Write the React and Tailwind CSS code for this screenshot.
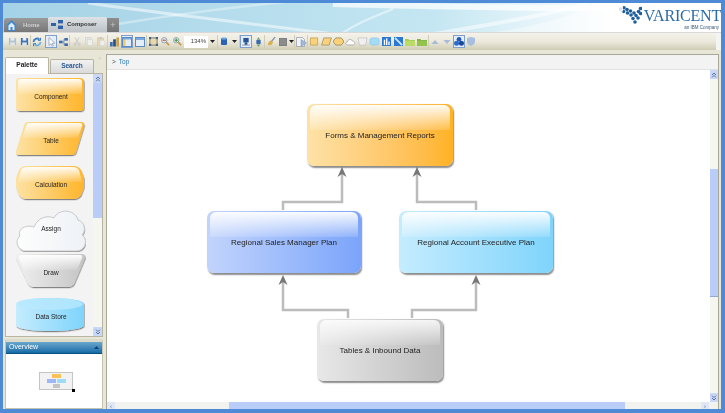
import React from 'react';

const sans = { fontFamily: '"Liberation Sans", Arial, sans-serif' };

// ---- toolbar icons ----
const Floppy = ({ c = '#3f72b4' }) => (
  <svg width="9" height="9" viewBox="0 0 10 10">
    <path d="M1 1h7l1 1v7H1z" fill={c} />
    <rect x="3" y="1" width="4" height="3" fill="#e8eef6" />
    <rect x="2.5" y="6" width="5" height="3" fill="#dfe6ee" />
  </svg>
);
const Refresh = () => (
  <svg width="10" height="10" viewBox="0 0 10 10" fill="none" stroke="#3f7fc0" strokeWidth="1.8">
    <path d="M1.5 5a3.5 3.5 0 0 1 6-2.4" />
    <path d="M8.5 5a3.5 3.5 0 0 1-6 2.4" stroke="#6aaee0" />
    <path d="M8.5 0.8v2.6H6" strokeWidth="1" />
    <path d="M1.5 9.2V6.6H4" strokeWidth="1" />
  </svg>
);
const Cursor = () => (
  <svg width="9" height="10" viewBox="0 0 9 10">
    <path d="M2 .5v8l2-1.8 1.2 2.6 1.2-.6-1.2-2.5h2.6z" fill="#fff" stroke="#8a94a4" strokeWidth=".7" />
  </svg>
);
const Connect = () => (
  <svg width="9" height="8" viewBox="0 0 10 9">
    <rect x="0" y="3" width="4" height="3" fill="#3a6cb0" />
    <rect x="6" y="0" width="4" height="3" fill="#3a6cb0" />
    <rect x="6" y="6" width="4" height="3" fill="#3a6cb0" />
    <path d="M4 4.5h1.5V1.5H6M5.5 4.5v3H6" fill="none" stroke="#3a6cb0" strokeWidth=".7" />
  </svg>
);
const Cut = () => (
  <svg width="8" height="9" viewBox="0 0 9 10" fill="none" stroke="#c4c6c8" strokeWidth="1">
    <path d="M7 .5 3 7M2 .5 6 7" />
    <circle cx="2.3" cy="8" r="1.3" />
    <circle cx="6.7" cy="8" r="1.3" />
  </svg>
);
const Copy = () => (
  <svg width="8" height="9" viewBox="0 0 9 10">
    <rect x=".5" y=".5" width="6" height="7" fill="#e6e6e2" stroke="#d0d0cc" strokeWidth=".7" />
    <rect x="2.5" y="2.5" width="6" height="7" fill="#efefec" stroke="#d0d0cc" strokeWidth=".7" />
  </svg>
);
const Paste = () => (
  <svg width="8" height="9" viewBox="0 0 9 10">
    <rect x=".5" y="1" width="7" height="8.5" fill="#e2d6b6" stroke="#d0c6a8" strokeWidth=".6" />
    <rect x="2" y="0" width="4" height="2" fill="#cdc9be" />
    <rect x="3.5" y="4" width="5" height="5.5" fill="#efefec" stroke="#d6d6d2" strokeWidth=".5" />
  </svg>
);
const Chart = () => (
  <svg width="9" height="10" viewBox="0 0 10 10">
    <rect x="0" y="5" width="3" height="5" fill="#3a6cb0" />
    <rect x="3.5" y="2" width="3" height="8" fill="#274f8c" />
    <rect x="7" y="0" width="3" height="10" fill="#c4a24c" />
  </svg>
);
const Pane = ({ side }) => (
  <svg width="10" height="10" viewBox="0 0 10 10">
    <rect x=".5" y=".5" width="9" height="9" fill="#e4eefa" stroke="#5a8cc8" />
    {side ? <rect x="1" y="1" width="2.5" height="8" fill="#f2c866" /> : <rect x="1" y="1" width="8" height="2" fill="#7fa8dc" />}
    {side && <rect x="1" y="1" width="8" height="1.5" fill="#7fa8dc" />}
  </svg>
);
const Fit = () => (
  <svg width="9" height="9" viewBox="0 0 10 10">
    <rect x="1" y="1" width="8" height="8" fill="#e8d9a8" stroke="#6a7480" />
    <rect x="0" y="0" width="2.4" height="2.4" fill="#44607e" />
    <rect x="7.6" y="0" width="2.4" height="2.4" fill="#44607e" />
    <rect x="0" y="7.6" width="2.4" height="2.4" fill="#44607e" />
    <rect x="7.6" y="7.6" width="2.4" height="2.4" fill="#44607e" />
  </svg>
);
const Zoom = ({ c }) => (
  <svg width="9" height="9" viewBox="0 0 10 10">
    <path d="M5.5 5.5 9 9" stroke="#c49a50" strokeWidth="2" />
    <circle cx="3.6" cy="3.6" r="3" fill="#dfeaf2" stroke="#8e9ca8" />
    <rect x="1.8" y="3" width="3.6" height="1.2" fill={c} />
    {c === '#3f9a3f' && <rect x="3" y="1.8" width="1.2" height="3.6" fill={c} />}
  </svg>
);
const Drop = () => (
  <svg width="5" height="3" viewBox="0 0 5 3"><path d="M0 0h5L2.5 3z" fill="#222" /></svg>
);
const Can = () => (
  <svg width="6" height="9" viewBox="0 0 7 10">
    <rect x="0" y="1" width="7" height="8" rx="1" fill="#2a62b8" />
    <ellipse cx="3.5" cy="1.6" rx="3.5" ry="1.4" fill="#6fa0e0" />
  </svg>
);
const Pin = () => (
  <svg width="8" height="9" viewBox="0 0 9 10">
    <rect x="1.5" y="1" width="6" height="5" fill="#27558f" />
    <rect x="3" y="6" width="3" height="3" fill="#27558f" />
    <rect x="0" y="8.5" width="9" height="1" fill="#8a9aaa" />
  </svg>
);
const Updown = () => (
  <svg width="7" height="10" viewBox="0 0 8 11">
    <path d="M4 0 6 2.5H2zM4 11 2 8.5h4z" fill="#6aa66a" />
    <rect x="1.5" y="3" width="5" height="5" rx="1" fill="#3a6cb0" />
  </svg>
);
const Brush = () => (
  <svg width="9" height="9" viewBox="0 0 10 10">
    <path d="M9 0 5 5" stroke="#8c9aac" strokeWidth="1.6" />
    <path d="M1 9c0-3 2-5 4-5l1.5 1.5C6.5 8 4 10 1 9z" fill="#d8b04c" />
  </svg>
);
const Square = () => <div className="h-[8px] w-[8px] border border-[#808080] bg-[#8c8c8c]" />;
const Page = () => (
  <svg width="11" height="10" viewBox="0 0 11 10">
    <path d="M.5.5h6l2 2v7h-8z" fill="#f3f3f3" stroke="#8e98a6" strokeWidth=".7" />
    <path d="M5 2.5 10.5 6 5 9.5z" fill="#a0b8d8" stroke="#7a94b8" strokeWidth=".5" />
  </svg>
);

const ShapeIcon = ({ d, fill, stroke }) => (
  <svg width="11" height="9" viewBox="0 0 12 10">
    <path d={d} fill={fill} stroke={stroke} strokeWidth=".8" />
  </svg>
);
const BlueTile = ({ children }) => (
  <svg width="9" height="9" viewBox="0 0 10 10">
    <rect width="10" height="10" fill="#2a7ad4" />
    {children}
  </svg>
);
const Folder = ({ light }) => (
  <svg width="10" height="8" viewBox="0 0 12 9">
    <path d="M0 1h4l1 1h7v7H0z" fill={light ? '#a6cc52' : '#7fb440'} />
    <rect x="0" y="3" width="12" height="6" fill={light ? '#bcdc68' : '#92c44c'} />
  </svg>
);
const Tri = ({ up }) => (
  <svg width="8" height="4" viewBox="0 0 9 5">
    <path d={up ? 'M4.5 0 9 5H0z' : 'M0 0h9L4.5 5z'} fill="#a8bcd8" />
  </svg>
);
const Boxes = () => (
  <svg width="10" height="9" viewBox="0 0 11 10">
    <circle cx="5.5" cy="2.6" r="2.6" fill="#2558b0" />
    <circle cx="2.8" cy="7" r="2.8" fill="#2c6cc8" />
    <circle cx="8.2" cy="7" r="2.8" fill="#1c4a98" />
  </svg>
);
const Shield = () => (
  <svg width="8" height="9" viewBox="0 0 9 10">
    <path d="M0 1 4.5 0 9 1v4c0 3-2.5 4-4.5 5C2.5 9 0 8 0 5z" fill="#a8bede" />
  </svg>
);

const Sep = () => <div className="h-[13px] w-px bg-[#cfccb8]" />;
const Tool = ({ children }) => (
  <div className="flex h-[14px] w-[12px] items-center justify-center">{children}</div>
);
const Pressed = ({ children }) => (
  <div className="flex h-[13px] w-[12px] items-center justify-center border border-[#7f9fcc] bg-[#e4edf8]">{children}</div>
);

const Toolbar = () => (
  <div className="flex h-[17px] w-[713px] items-center bg-linear-to-b from-[#f4f2ea] via-[#ece9dc] to-[#cfccb4] pl-[3px]" style={sans}>
    <Tool><Floppy c="#b4c2d0" /></Tool>
    <Tool><Floppy /></Tool>
    <Sep />
    <Tool><Refresh /></Tool>
    <div className="w-[2px]" />
    <Pressed><Cursor /></Pressed>
    <Tool><Connect /></Tool>
    <Sep />
    <div className="w-px" />
    <Tool><Cut /></Tool>
    <Tool><Copy /></Tool>
    <Tool><Paste /></Tool>
    <Sep />
    <Tool><Chart /></Tool>
    <div className="w-px" />
    <Pressed><Pane side /></Pressed>
    <div className="w-px" />
    <Tool><Pane /></Tool>
    <Sep />
    <Tool><Fit /></Tool>
    <Tool><Zoom c="#c04a3a" /></Tool>
    <Tool><Zoom c="#3f9a3f" /></Tool>
    <div className="ml-[1px] flex h-[12px] w-[24px] items-center justify-end bg-white pr-[2px] text-[6px] text-[#444]">134%</div>
    <div className="flex w-[9px] justify-center"><Drop /></div>
    <Sep />
    <Tool><Can /></Tool>
    <div className="flex w-[9px] justify-center"><Drop /></div>
    <Sep />
    <Pressed><Pin /></Pressed>
    <Tool><Updown /></Tool>
    <Sep />
    <Tool><Brush /></Tool>
    <Tool><Square /></Tool>
    <div className="flex w-[5px] justify-center"><Drop /></div>
    <Sep />
    <Tool><Page /></Tool>
    <Sep />
    <Tool><ShapeIcon d="M1.5 1h8v8h-8z" fill="#fbd27a" stroke="#b89a4c" /></Tool>
    <Tool><ShapeIcon d="M3 1h8.5L9 9H.5z" fill="#fbd27a" stroke="#9a8a5c" /></Tool>
    <Tool><ShapeIcon d="M3 1h6l2.5 3v2L9 9H3L.5 6V4z" fill="#fbd27a" stroke="#8a7a4c" /></Tool>
    <Tool><ShapeIcon d="M3 8.8C0 8.8 0 5.5 2.5 5.5 3 2 7.5 2 8 4.5c3.5 0 3.5 4.3 1 4.3z" fill="#fff" stroke="#9f9f9f" /></Tool>
    <Tool><ShapeIcon d="M1 1h10L9.5 9h-7z" fill="#f0f0f0" stroke="#c0c0c0" /></Tool>
    <Tool><ShapeIcon d="M1 2.5C1 .5 11 .5 11 2.5v5c0 2-10 2-10 0z" fill="#a4dcf8" stroke="#8cc4e4" /></Tool>
    <Tool>
      <BlueTile>
        <rect x="2" y="3" width="1.5" height="6" fill="#fff" />
        <rect x="4.5" y="1.5" width="1.5" height="7.5" fill="#fff" />
        <rect x="7" y="5" width="1.5" height="4" fill="#fff" />
      </BlueTile>
    </Tool>
    <Tool>
      <BlueTile>
        <path d="M1 1 9 9" stroke="#cfe6fa" strokeWidth="2" />
      </BlueTile>
    </Tool>
    <Tool><Folder light /></Tool>
    <Tool><Folder /></Tool>
    <Sep />
    <Tool><Tri up /></Tool>
    <Tool><Tri /></Tool>
    <Pressed><Boxes /></Pressed>
    <Tool><Shield /></Tool>
  </div>
);

// ---- header ----
const Logo = () => (
  <div className="flex w-[105px] flex-col items-end pt-[3px]">
    <div className="flex items-center gap-[2px]">
      <svg width="23" height="19" viewBox="0 0 23 19" fill="#1f5f9c">
        {[[1.5, 3], [5, 1.8], [8, 3.5], [4.5, 5.5], [8.5, 7], [11.5, 5], [12, 9], [15, 7], [14, 12.5], [17, 9.5], [16, 16], [19, 12], [19.5, 5.5], [21.5, 2.5], [21.5, 7.5]].map(([x, y], i) => (
          <circle key={i} cx={x} cy={y} r="1.8" />
        ))}
      </svg>
      <span className="text-[16px] leading-[18px] tracking-[-0.2px] text-[#2a6ba4]" style={{ fontFamily: '"Liberation Serif", "Times New Roman", serif' }}>VARICENT</span>
    </div>
    <span className="pr-[2px] text-[4.5px] leading-[5px] text-[#3a5a7a]" style={sans}>an IBM Company</span>
  </div>
);

const Header = () => (
  <div className="relative flex h-[30px] items-start justify-end overflow-hidden border-b border-[#d8d8d8] bg-linear-to-r from-[#a4d2e6] via-[#c4e6f2] via-60% to-white to-85%">
    <svg className="absolute left-0 top-0" width="620" height="30" viewBox="0 0 620 30" fill="none">
      <path d="M85 0 C 140 8, 190 14, 340 32" stroke="#fff" strokeOpacity=".5" strokeWidth="3" />
      <path d="M60 30 C 120 20, 190 8, 292 -2" stroke="#fff" strokeOpacity=".35" strokeWidth="2.5" />
      <path d="M330 1 C 420 3, 520 6, 620 5" stroke="#fff" strokeOpacity=".7" strokeWidth="6" />
      <path d="M337 32 C 350 22, 370 14, 390 6" stroke="#fff" strokeOpacity=".5" strokeWidth="2" />
      <path d="M425 32 C 470 24, 540 14, 585 0" stroke="#fff" strokeOpacity=".5" strokeWidth="4" />
      <path d="M470 32 C 520 26, 570 16, 590 0 L 620 0 L 620 32 Z" fill="#fff" fillOpacity=".4" />
    </svg>
    <Logo />
    <div className="absolute bottom-0 left-[1px] flex items-end" style={sans}>
      <div className="flex h-[14px] w-[44px] items-center gap-[6px] rounded-tl-[3px] bg-linear-to-b from-[#9a9a9a] to-[#777] pl-[2px]">
        <svg width="11" height="11" viewBox="0 0 11 11">
          <path d="M5.5 0 11 5.5H9.5V11h-8V5.5H0z" fill="#3f86cc" />
          <path d="M2.5 5.5 5.5 2.5l3 3V10h-6z" fill="#dcecf8" />
          <rect x="4.5" y="7" width="2" height="3" fill="#3f86cc" />
        </svg>
        <span className="text-[6px] font-bold text-[#cfcfcf]">Home</span>
      </div>
      <div className="flex h-[15px] w-[59px] items-center gap-[4px] rounded-t-[2px] bg-linear-to-b from-[#dfe3e6] to-[#bcc2c6] pl-[3px]">
        <svg width="12" height="9" viewBox="0 0 12 9">
          <rect x="0" y="3" width="5" height="3" fill="#2f62a8" />
          <rect x="7" y="0" width="5" height="3.4" fill="#2f62a8" />
          <rect x="7" y="5.6" width="5" height="3.4" fill="#2f62a8" />
        </svg>
        <span className="text-[6px] font-bold text-[#333]">Composer</span>
      </div>
      <div className="flex h-[14px] w-[12px] items-center justify-center bg-linear-to-b from-[#8e8e8e] to-[#747474] text-[9px] leading-none text-[#c8c8c8]">+</div>
    </div>
  </div>
);

// ---- palette ----
const Defs = () => (
  <svg width="0" height="0" className="absolute">
    <defs>
      <linearGradient id="org" x1="0" x2="1"><stop offset="0" stopColor="#fde2a4" /><stop offset="1" stopColor="#ffb52a" /></linearGradient>
      <linearGradient id="gry" x1="0" x2="1"><stop offset="0" stopColor="#f0f0f0" /><stop offset="1" stopColor="#c4c4c4" /></linearGradient>
      <linearGradient id="cyn" x1="0" x2="1"><stop offset="0" stopColor="#c4ecfe" /><stop offset="1" stopColor="#7fd4fc" /></linearGradient>
      <linearGradient id="cld" x1="0" x2="1"><stop offset="0" stopColor="#fdfdfd" /><stop offset="1" stopColor="#eef2f6" /></linearGradient>
      <linearGradient id="gls" x1="0" x2="0" y1="0" y2="1"><stop offset="0" stopColor="#fff" stopOpacity=".95" /><stop offset="1" stopColor="#fff" stopOpacity=".1" /></linearGradient>
      <filter id="shd" x="-10%" y="-10%" width="125%" height="130%"><feDropShadow dx="0.6" dy="1.2" stdDeviation="0.7" floodColor="#000" floodOpacity=".45" /></filter>
    </defs>
  </svg>
);

const PaletteItem = ({ label, h, d, fill, gloss, extra, labelClass = 'translate-y-[1.5px]' }) => (
  <div className="grid place-items-center">
    <svg className="[grid-area:1/1]" width="70" height={h} viewBox={`0 0 70 ${h}`}>
      <path d={d} fill={fill} filter="url(#shd)" />
      {gloss && <path d={gloss} fill="url(#gls)" />}
      {extra}
    </svg>
    <span className={`[grid-area:1/1] text-[6.5px] leading-none text-[#222] ${labelClass}`} style={sans}>{label}</span>
  </div>
);

const ScrollBtn = ({ up, className = 'h-[9px] w-full' }) => (
  <div className={`flex items-center justify-center bg-[#c9d8f6] ${className}`}>
    <svg width="6" height="6" viewBox="0 0 6 6" fill="none" stroke="#3c5a8c">
      <path d={up ? 'M1 3 3 1l2 2M1 5.4l2-2 2 2' : 'M1 .6l2 2 2-2M1 3l2 2 2-2'} strokeWidth=".8" />
    </svg>
  </div>
);

const CLOUD = 'M10 42C2 42-2 32 4 27 1 20 10 15 18 18 22 8 32 6 38 9 42 0 58-1 62 11 69 13 70 22 66 26 72 30 70 42 60 42z';

const Palette = () => (
  <div className="flex min-h-0 flex-1 border border-t-0 border-[#b7b5a2] bg-[#f3f3f3]">
    <div className="flex min-w-0 flex-1 flex-col items-center gap-[8px] overflow-hidden pl-[3px] pt-[3px]">
      <PaletteItem
        label="Component"
        h={36}
        d="M4 1h60q4 0 4 4v25q0 4-4 4H4q-4 0-4-4V5q0-4 4-4z"
        fill="url(#org)"
        gloss="M5 2h58q3 0 3 3v12H2V5q0-3 3-3z"
      />
      <PaletteItem
        label="Table"
        h={36}
        d="M12 1h53q4 0 3 4l-8 26q-1 3-5 3H3q-4 0-3-4l8-25q1-4 4-4z"
        fill="url(#org)"
        gloss="M13 2h51q3 0 2 3l-4 12H6l4-12q1-3 3-3z"
      />
      <PaletteItem
        label="Calculation"
        h={36}
        d="M10 1h48q4 0 7 4l3 8v9l-3 8q-3 4-7 4H10q-4 0-7-4l-3-8v-9l3-8q3-4 7-4z"
        fill="url(#org)"
        gloss="M11 2h46q4 0 6 3l3 12H2L5 5q2-3 6-3z"
      />
      <PaletteItem
        label="Assign"
        h={43}
        d={CLOUD}
        fill="url(#cld)"
        labelClass="-translate-y-[1.5px]"
        extra={<path d={CLOUD} fill="none" stroke="#c9c9c9" />}
      />
      <div className="-mt-[7px]">
        <PaletteItem
          label="Draw"
          h={36}
          d="M3 1h63q4 0 3 4L58 31q-2 3-5 3H17q-3 0-5-3L0 5Q-1 1 3 1z"
          fill="url(#gry)"
          gloss="M5 2h59q3 0 2 3l-5 12H8L3 5Q2 2 5 2z"
        />
      </div>
      <PaletteItem
        label="Data Store"
        h={36}
        d="M0 7C0-1 68-1 68 7v21c0 8-68 8-68 0z"
        fill="url(#cyn)"
        extra={<ellipse cx="34" cy="7" rx="33" ry="6" fill="#b8e8fe" fillOpacity=".8" />}
      />
    </div>
    <div className="flex w-[9px] flex-col justify-between bg-[#f6f6f0]">
      <ScrollBtn up />
      <div className="mb-auto h-[135px] bg-[#b9cdf8]" />
      <ScrollBtn />
    </div>
  </div>
);

const Overview = () => (
  <div className="mt-[2px] flex h-[70px] flex-col border border-t-[3px] border-[#c4c2b0] border-t-[#dcdacb] bg-white" style={sans}>
    <div className="flex h-[12px] items-center justify-between border-b border-[#0b4f80] bg-linear-to-b from-[#6aa6cc] to-[#0f6ca8] px-[3px]">
      <span className="text-[7px] text-white">Overview</span>
      <svg width="5" height="3" viewBox="0 0 5 3"><path d="M2.5 0 5 3H0z" fill="#123f7c" /></svg>
    </div>
    <div className="flex flex-1 justify-center pl-[4px] pt-[18px]">
      <div className="relative flex h-[18px] w-[34px] flex-col items-center gap-[1px] border border-[#c4c4c4] bg-[#f2f2f2] pt-[1px]">
        <div className="h-[4px] w-[9px] bg-[#fbc25a]" />
        <div className="flex gap-[1px]">
          <div className="h-[4px] w-[9px] bg-[#9db8f4]" />
          <div className="h-[4px] w-[9px] bg-[#9bdcfa]" />
        </div>
        <div className="h-[4px] w-[7px] bg-[#c4c4c4]" />
        <div className="absolute -bottom-[3px] -right-[3px] h-[3px] w-[3px] bg-black" />
      </div>
    </div>
  </div>
);

const LeftPanel = () => (
  <div className="flex w-[98px] flex-col" style={sans}>
    <div className="flex h-[19px] items-end">
      <div className="z-10 -mb-px flex h-[17px] w-[44px] items-center justify-center rounded-t-[2px] border border-b-0 border-[#b7b5a2] bg-white pb-[2px] text-[6.5px] font-bold text-[#222]">Palette</div>
      <div className="ml-[1px] flex h-[14px] w-[44px] items-center justify-center rounded-t-[2px] border border-b-0 border-[#b7b5a2] bg-linear-to-b from-[#f2f2f2] to-[#dadada] pb-[1px] text-[6.5px] font-bold text-[#2a5a96]">Search</div>
      <span className="ml-[4px] self-start text-[6px] leading-[8px] text-[#cfcdbc]">×</span>
    </div>
    <div className="flex min-h-0 flex-1 flex-col border-t border-[#b7b5a2]">
      <Palette />
      <Overview />
    </div>
  </div>
);

// ---- canvas ----
const Node = ({ label, className, from, gloss }) => (
  <div className={`absolute flex items-center justify-center overflow-hidden rounded-[7px] pt-[2px] shadow-[1px_1.5px_1.5px_rgba(0,0,0,0.45)] ${className} ${from}`}>
    <div className={`absolute left-[3px] right-[3px] top-[1px] h-[25px] rounded-t-[6px] ${gloss}`} />
    <span className="relative text-[8px] text-[#222]" style={sans}>{label}</span>
  </div>
);

const Arrow = ({ d, x, y }) => (
  <g>
    <path d={d} fill="none" stroke="#bcbcbc" strokeWidth="2.5" />
    <path d={`M${x} ${y} l4.5 10 l-4.5 -3 l-4.5 3 z`} fill="#777" />
  </g>
);

const Canvas = () => (
  <div className="relative flex-1 bg-white">
    <svg className="absolute left-0 top-0" width="603" height="332" viewBox="0 0 603 332">
      <Arrow d="M176 140V132H235V103" x={235} y={97} />
      <Arrow d="M369 140V132H310V103" x={310} y={97} />
      <Arrow d="M241 248V240H176V211" x={176} y={205} />
      <Arrow d="M305 248V240H369V211" x={369} y={205} />
    </svg>
    <Node
      label="Forms & Management Reports"
      className="left-[200px] top-[34px] h-[62px] w-[146px]"
      from="bg-linear-to-r from-[#fde2a6] to-[#ffb21f]"
      gloss="bg-linear-to-b from-white/95 to-white/15"
    />
    <Node
      label="Regional Sales Manager Plan"
      className="left-[100px] top-[141px] h-[62px] w-[154px]"
      from="bg-linear-to-r from-[#c2d4fc] to-[#7ba4fa]"
      gloss="bg-linear-to-b from-white/95 to-white/15"
    />
    <Node
      label="Regional Account Executive Plan"
      className="left-[292px] top-[141px] h-[62px] w-[154px]"
      from="bg-linear-to-r from-[#c4ecfe] to-[#7fd4fc]"
      gloss="bg-linear-to-b from-white/95 to-white/15"
    />
    <Node
      label="Tables & Inbound Data"
      className="left-[210px] top-[249px] h-[62px] w-[126px]"
      from="bg-linear-to-r from-[#e8e8e8] to-[#bcbcbc]"
      gloss="bg-linear-to-b from-white/85 to-white/10"
    />
  </div>
);

const MainPanel = () => (
  <div className="flex min-w-0 flex-1 flex-col border-x border-t border-[#a9a798]">
    <div className="flex h-[15px] items-center gap-[3px] border-b border-[#e2e2e2] bg-[#f3f3f3] pl-[5px] text-[6.5px]" style={sans}>
      <span className="text-[#444]">&gt;</span>
      <span className="text-[#2a7ab4]">Top</span>
    </div>
    <div className="flex min-h-0 flex-1">
      <Canvas />
      <div className="flex w-[8px] flex-col bg-[#f6f6f0]">
        <ScrollBtn up />
        <div className="h-[90px]" />
        <div className="h-[128px] border-b border-[#8fa8d8] bg-[#b9cdf8]" />
        <div className="flex-1" />
        <ScrollBtn />
      </div>
    </div>
    <div className="flex h-[7px] bg-[#f2f2ee]">
      <div className="flex w-[122px]"><div className="flex h-full w-[8px] items-center justify-center bg-[#dfe6f4] text-[6px] leading-none text-[#3c5a8c]">‹</div></div>
      <div className="w-[396px] bg-[#b9cdf8]" />
      <div className="flex flex-1 justify-end"><div className="mr-[9px] flex h-full w-[8px] items-center justify-center bg-[#dfe6f4] text-[6px] leading-none text-[#3c5a8c]">›</div></div>
    </div>
  </div>
);

export default function App() {
  return (
    <div className="flex h-[413px] w-[725px] flex-col overflow-hidden bg-[#4f8ad6] pb-[4px] pl-[3px] pr-[4px] pt-[3px] blur-[0.35px]">
      <Defs />
      <Header />
      <div className="bg-[#f4f4f0]">
        <Toolbar />
      </div>
      <div className="flex min-h-0 flex-1 gap-[3px] bg-[#e8e6d6] pl-[2px] pr-[2px] pt-[4px]">
        <LeftPanel />
        <MainPanel />
      </div>
    </div>
  );
}
